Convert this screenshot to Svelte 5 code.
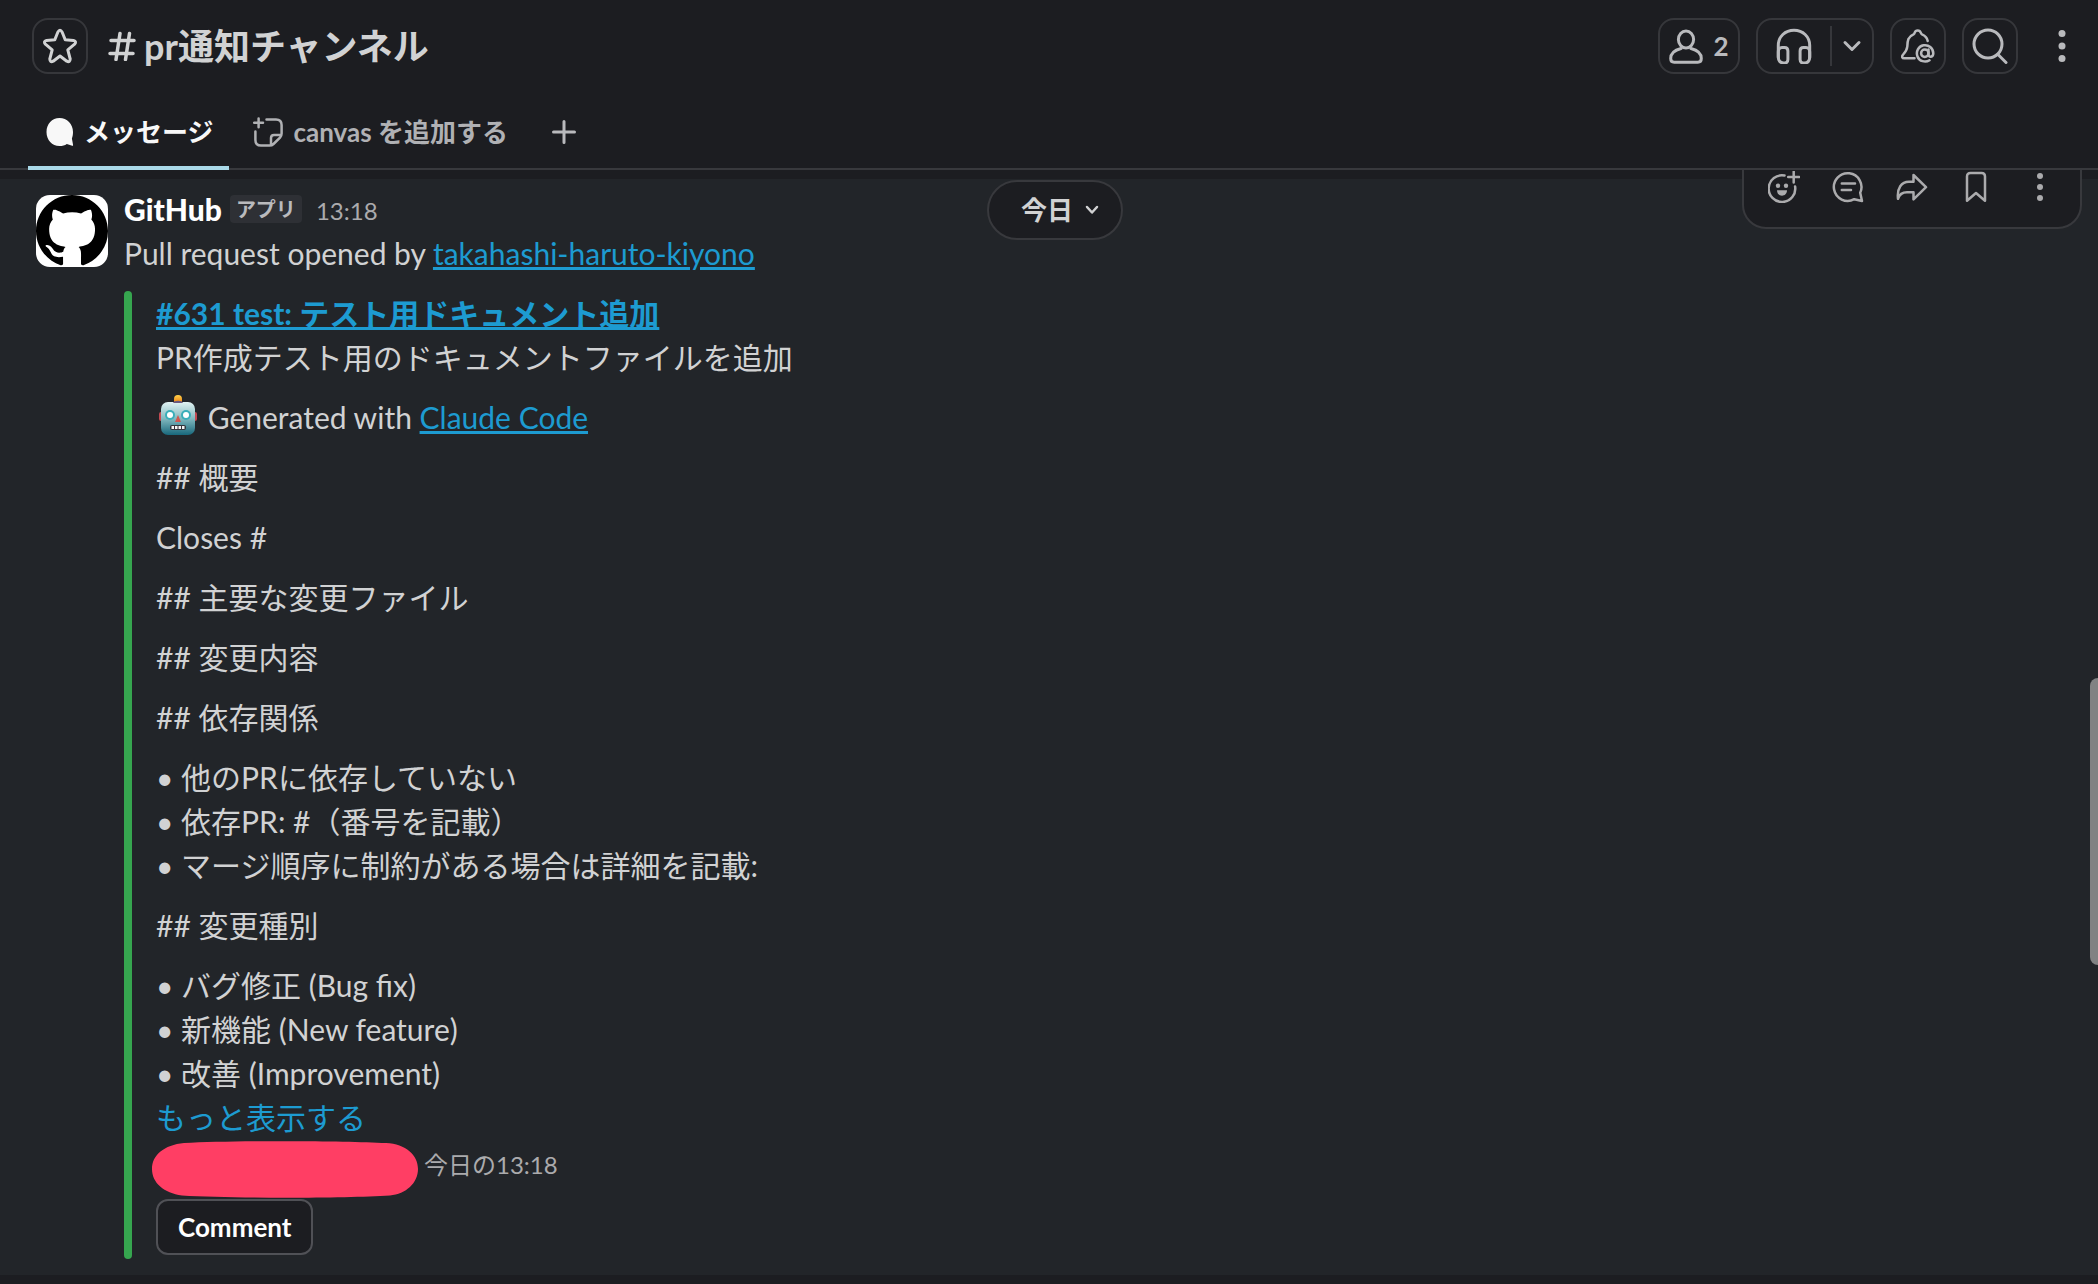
<script>
	const intro = ['## 概要', 'Closes #', '## 主要な変更ファイル', '## 変更内容', '## 依存関係'];
	const dependencies = [
		'他のPRに依存していない',
		'依存PR: #（番号を記載）',
		'マージ順序に制約がある場合は詳細を記載:'
	];
	const changeTypes = ['バグ修正 (Bug fix)', '新機能 (New feature)', '改善 (Improvement)'];
</script>

<div class="page">
	<header>
		<div class="title-bar">
			<button class="box-btn" aria-label="スターを付ける">
				<svg class="icon" width="36" height="36" viewBox="0 0 36 36">
					<path d="M15.8 4.2Q18 .4 20.2 4.2L23.2 11.8L31.5 12.4Q35 13.4 32.6 16.2L25.8 21.8L28.2 31Q28 34.8 24.8 33.2L18 28L11.2 33.2Q8 34.8 7.8 31L10.2 21.8L3.4 16.2Q1 13.4 4.5 12.4L12.8 11.8Z" />
				</svg>
			</button>
			<h1>
				<svg class="icon hash" width="28" height="30" viewBox="0 0 28 30">
					<path d="M3 9.5H26M2 22.5H25M12 2.5L8 28.5M21.5 2.5L17.5 28.5" />
				</svg>
				<span>pr通知チャンネル</span>
			</h1>
			<div class="actions">
				<button class="box-btn members" aria-label="2 人のメンバー">
					<svg class="icon" width="34" height="36" viewBox="0 0 34 36">
						<ellipse cx="17" cy="11.5" rx="7.6" ry="8.6" />
						<path d="M12 20.5C5 22.3 1.7 26.5 1.7 30.5C1.7 33.2 3 34.2 5.2 34.2H28.8C31 34.2 32.3 33.2 32.3 30.5C32.3 26.500 29 22.3 22 20.5" />
					</svg>
					<span>2</span>
				</button>
				<div class="huddle">
					<button class="huddle-start" aria-label="ハドルミーティングを開始">
						<svg class="icon" width="36" height="36" viewBox="0 0 36 36">
							<path d="M2.3 30V17.500C2.3 8.5 9.2 2.3 18 2.3S33.7 8.5 33.7 17.5V30" />
							<path d="M2.3 24C2.3 21 3.5 19.5 6 19.5H8.5C10.8 19.5 11.9 20.7 11.9 23V31.5C11.9 34 10.8 35 8.8 35H7.5C4 35 2.3 32.5 2.3 28.5ZM33.7 24C33.7 21 32.5 19.5 30 19.5H27.5C25.2 19.5 24.1 20.7 24.1 23V31.5C24.1 34 25.2 35 27.2 35H28.5C32 35 33.7 32.5 33.7 28.5Z" />
						</svg>
					</button>
					<button class="huddle-more" aria-label="その他のオプション">
						<svg class="icon" width="20" height="20" viewBox="0 0 20 20">
							<path d="M3 6.5L10 13.5L17 6.5" />
						</svg>
					</button>
				</div>
				<button class="box-btn" aria-label="通知設定">
					<svg class="icon thin" width="34" height="34" viewBox="0 0 34 34">
						<path d="M13.5 29.3H3.2C1 29.3 .6 27.5 1.8 26C4.3 23.4 6 21.3 6.3 17.5C6.5 11.5 7 7.5 12.5 5.3C13.5 4.8 13.5 4.5 13.7 3.6C14.6 .7 18.8 .7 19.7 3.6C19.9 4.5 20 4.8 21 5.3C24.5 6.8 26.3 9 26.7 12" />
						<circle cx="23.8" cy="24.3" r="3.7" />
						<path d="M27.5 20.5V25.5C27.5 28.8 32.3 28.5 32.3 24.3A8.2 8.2 0 1 0 28.5 31.3" />
					</svg>
				</button>
				<button class="box-btn" aria-label="検索">
					<svg class="icon" width="36" height="36" viewBox="0 0 36 36">
						<circle cx="16" cy="16" r="14" />
						<path d="M26 26.5L34 34.5" />
					</svg>
				</button>
				<button class="plain-btn" aria-label="その他">
					<svg class="dots" width="36" height="36" viewBox="0 0 36 36">
						<circle cx="18" cy="5.5" r="3.5" />
						<circle cx="18" cy="18" r="3.5" />
						<circle cx="18" cy="30.5" r="3.5" />
					</svg>
				</button>
			</div>
		</div>
		<nav class="tabs">
			<a href="#messages" class="tab active">
				<svg width="28" height="28" viewBox="0 0 28 28">
					<path fill="currentColor" d="M13.5 0C6 0 .5 6 .5 14S6 28 13.5 28C16.5 28 18.8 27.2 20.8 25.9L26.2 27.8Q27.2 28 27.1 26.9L25.9 20.5C26.6 18.6 27 16.5 27 14C27 6 21 0 13.5 0Z" />
				</svg>
				<span>メッセージ</span>
			</a>
			<a href="#canvas" class="tab">
				<svg class="icon thin" width="30" height="30" viewBox="0 0 30 30">
					<path d="M1.2 5.8H10M5.6 1.4V10.2M13.5 2.4H23C27 2.4 28.6 4 28.6 8V16.5C28.6 18.5 28 19.5 27 20.6L20.5 27C19.5 28 18.5 28.6 16.5 28.6H8C4 28.6 2.4 27 2.4 23V14.5M18 28V21C18 19 19 18 21 18H28" />
				</svg>
				<span>canvas を追加する</span>
			</a>
			<button class="add-tab" aria-label="タブを追加">
				<svg class="icon" width="24" height="24" viewBox="0 0 24 24">
					<path d="M12 1.5V22.5M1.5 12H22.5" />
				</svg>
			</button>
		</nav>
	</header>

	<main>
		<article class="message">
			<svg class="avatar" width="72" height="72" viewBox="0 0 16 16">
				<path d="M8 0C3.58 0 0 3.58 0 8c0 3.54 2.29 6.53 5.47 7.59.4.07.55-.17.55-.38 0-.19-.01-.82-.01-1.49-2.01.37-2.53-.49-2.69-.94-.09-.23-.48-.94-.82-1.13-.28-.15-.68-.52-.01-.53.63-.01 1.08.58 1.23.82.72 1.21 1.87.87 2.33.66.07-.52.28-.87.51-1.07-1.78-.2-3.64-.89-3.64-3.95 0-.87.31-1.59.82-2.15-.08-.2-.36-1.02.08-2.12 0 0 .67-.21 2.2.82.64-.18 1.32-.27 2-.27.68 0 1.36.09 2 .27 1.53-1.04 2.2-.82 2.2-.82.44 1.1.16 1.92.08 2.12.51.56.82 1.27.82 2.15 0 3.07-1.87 3.75-3.65 3.95.29.25.54.73.54 1.48 0 1.07-.01 1.93-.01 2.2 0 .21.15.46.55.38A8.013 8.013 0 0016 8c0-4.42-3.58-8-8-8z" />
			</svg>
			<div class="body">
				<div class="meta">
					<strong>GitHub</strong>
					<span class="badge">アプリ</span>
					<time>13:18</time>
				</div>
				<p>Pull request opened by <a href="#author">takahashi-haruto-kiyono</a></p>
				<section class="attachment">
					<div>
						<p class="pr-title"><a href="#pr-631">#631 test: テスト用ドキュメント追加</a></p>
						<p>PR作成テスト用のドキュメントファイルを追加</p>
					</div>
					<p>
						<svg class="emoji" width="44" height="44" viewBox="0 0 44 44" role="img" aria-label="ロボット">
							<defs>
								<linearGradient id="robot-face" x1="0" y1="0" x2="0" y2="1">
									<stop offset="0" stop-color="#e2f3f3" />
									<stop offset=".5" stop-color="#82b9bf" />
									<stop offset="1" stop-color="#17677b" />
								</linearGradient>
								<linearGradient id="robot-light" x1="0" y1="0" x2="0" y2="1">
									<stop offset="0" stop-color="#ffd34a" />
									<stop offset=".6" stop-color="#f0911f" />
									<stop offset="1" stop-color="#7a4668" />
								</linearGradient>
							</defs>
							<rect x="3" y="17" width="4" height="9" rx="2" fill="#c24a52" />
							<rect x="37" y="17" width="4" height="9" rx="2" fill="#c24a52" />
							<rect x="18" y="0" width="8" height="10" rx="4" fill="url(#robot-light)" />
							<rect x="5" y="7" width="34" height="33" rx="7" fill="url(#robot-face)" />
							<path d="M17 8C18 5 26 5 27 8Z" fill="#6b5a7e" />
							<circle cx="14" cy="20" r="5" fill="#39aeb9" />
							<circle cx="30" cy="20" r="5" fill="#39aeb9" />
							<circle cx="14" cy="20" r="3" fill="#fff" />
							<circle cx="30" cy="20" r="3" fill="#fff" />
							<path d="M22 20L25 27H19Z" fill="#d0564f" />
							<rect x="14" y="30" width="16" height="5" rx="2" fill="#33343a" />
							<path d="M15.5 31H18V34H15.5ZM19 31H21.5V34H19ZM22.5 31H25V34H22.5ZM26 31H28.5V34H26Z" fill="#f4f4f4" />
						</svg>
						Generated with <a href="#claude-code">Claude Code</a>
					</p>
					{#each intro as line}
						<p>{line}</p>
					{/each}
					<div>
						{#each dependencies as item}
							<p>• {item}</p>
						{/each}
					</div>
					<p>## 変更種別</p>
					<div>
						{#each changeTypes as item}
							<p>• {item}</p>
						{/each}
						<button class="show-more">もっと表示する</button>
						<div class="source">
							<svg width="266" height="57" viewBox="0 0 266 57">
								<path fill="#ff3e64" d="M32 2C80-.5 190-.5 234 2C254 3 266 14 266 28S254 53 238 54.5C190 57.5 80 57.5 30 54.5C12 52 0 42 0 28S12 4 32 2Z" />
							</svg>
							<span>今日の13:18</span>
						</div>
						<button class="comment">Comment</button>
					</div>
				</section>
			</div>
		</article>

		<div class="date-row">
			<button class="date-pill">
				<span>今日</span>
				<svg class="icon thin" width="14" height="14" viewBox="0 0 14 14">
					<path d="M2 4L7 9.5L12 4" />
				</svg>
			</button>
		</div>

		<div class="toolbar">
			<button aria-label="リアクションする">
				<svg class="icon thin" width="32" height="32" viewBox="0 0 32 32">
					<path d="M16.5 4.6A13.3 13.3 0 1 0 27.1 15.5M25.7 .5V11.5M20.2 6H31.2" />
					<circle class="solid" cx="10" cy="14.7" r="2.2" />
					<circle class="solid" cx="18" cy="14.7" r="2.2" />
					<path class="solid" d="M9 19.3H19C19 26.5 9 26.5 9 19.3Z" />
				</svg>
			</button>
			<button aria-label="スレッドで返信する">
				<svg class="icon thin" width="32" height="32" viewBox="0 0 32 32">
					<path d="M28.2 21.8A13.8 13.8 0 1 0 22.2 28.2L30 30Z" />
					<path d="M9.8 12.5H23M9.8 19H19" />
				</svg>
			</button>
			<button aria-label="メッセージを転送する">
				<svg class="icon thin" width="32" height="32" viewBox="0 0 32 32">
					<path d="M17.5 4L30 16.2L17.5 28.4V21.3H11C6 21.3 3.5 23 2 27.8C.8 17 5.5 10.8 13 10.8H17.5Z" />
				</svg>
			</button>
			<button aria-label="後で">
				<svg class="icon thin" width="32" height="32" viewBox="0 0 32 32">
					<path d="M7 5.5C7 3.2 8.2 2 10.5 2H21.5C23.8 2 25 3.2 25 5.5V29.8L16 22L7 29.8Z" />
				</svg>
			</button>
			<button aria-label="その他の操作">
				<svg class="dots" width="32" height="32" viewBox="0 0 32 32">
					<circle cx="16" cy="5" r="3" />
					<circle cx="16" cy="16" r="3" />
					<circle cx="16" cy="27" r="3" />
				</svg>
			</button>
		</div>

		<div class="scroll-thumb"></div>
	</main>
</div>

<style>
	:global(body) {
		background: #1c1d21;
	}

	.page {
		display: flex;
		flex-direction: column;
		min-height: 100vh;
		font-family: Lato, 'Noto Sans CJK JP', sans-serif;
		font-size: 30px;
		line-height: 44px;
		color: #d1d2d3;
		background: #1c1d21;
	}

	h1,
	p {
		margin: 0;
	}

	button {
		display: flex;
		align-items: center;
		justify-content: center;
		padding: 0;
		border: none;
		background: none;
		color: #b9babd;
		font: inherit;
		cursor: pointer;
	}

	svg {
		flex-shrink: 0;
	}

	.icon {
		fill: none;
		stroke: currentColor;
		stroke-width: 3;
		stroke-linecap: round;
		stroke-linejoin: round;
	}

	.icon.thin {
		stroke-width: 2.5;
	}

	.icon.hash {
		stroke-width: 3.5;
	}

	.icon .solid {
		fill: currentColor;
		stroke: none;
	}

	.dots {
		fill: currentColor;
	}

	header {
		border-bottom: 2px solid #38393d;
	}

	.title-bar {
		display: flex;
		align-items: center;
		padding: 18px 8px 0 32px;
	}

	.box-btn {
		box-sizing: border-box;
		width: 56px;
		height: 56px;
		border: 2px solid #36373b;
		border-radius: 16px;
	}

	.title-bar > .box-btn {
		color: #d1d2d3;
	}

	h1 {
		display: flex;
		align-items: center;
		gap: 8px;
		margin-left: 20px;
		font-size: 36px;
		font-weight: 700;
	}

	.actions {
		display: flex;
		gap: 16px;
		margin-left: auto;
	}

	.members {
		gap: 10px;
		width: 82px;
		font-size: 26px;
		font-weight: 700;
	}

	.huddle {
		display: flex;
		align-items: center;
		box-sizing: border-box;
		height: 56px;
		border: 2px solid #36373b;
		border-radius: 16px;
	}

	.huddle-start {
		width: 74px;
		height: 40px;
		border-right: 2px solid #36373b;
	}

	.huddle-more {
		width: 40px;
		height: 40px;
	}

	.plain-btn {
		width: 56px;
		height: 56px;
	}

	.tabs {
		display: flex;
		align-items: flex-start;
		margin: 24px 0 -2px;
		padding: 0 28px;
		font-size: 26px;
		font-weight: 700;
	}

	.tab {
		display: flex;
		align-items: center;
		gap: 10px;
		height: 68px;
		padding: 0 16px 0 18px;
		border-bottom: 4px solid transparent;
		color: #b0b1b4;
		text-decoration: none;
	}

	.tab + .tab {
		padding: 0 8px;
		margin-left: 16px;
	}

	.tab.active {
		color: #f8f8f8;
		border-color: #a9d9e8;
	}

	.add-tab {
		width: 56px;
		height: 68px;
		margin-left: 20px;
	}

	main {
		position: relative;
		flex: 1;
		overflow: hidden;
		padding: 9px 0;
	}

	.message {
		display: flex;
		gap: 16px;
		padding: 8px 36px 16px;
		background: #222529;
	}

	.avatar {
		margin-top: 8px;
		border-radius: 14px;
		background: #fff;
	}

	.body {
		flex: 1;
		min-width: 0;
	}

	.meta {
		display: flex;
		align-items: center;
		height: 44px;
	}

	.meta strong {
		font-weight: 900;
		color: #fff;
	}

	.badge {
		margin-left: 8px;
		padding: 0 6px;
		border-radius: 4px;
		background: #2e3035;
		color: #b9babd;
		font-size: 20px;
		font-weight: 700;
		line-height: 28px;
	}

	time {
		margin-left: 14px;
		padding-top: 4px;
		font-size: 24px;
		line-height: 40px;
		color: #ababad;
	}

	.body a {
		color: #1d9bd1;
		text-decoration-thickness: 3px;
		text-underline-offset: 2px;
	}

	.attachment {
		display: flex;
		flex-direction: column;
		gap: 16px;
		position: relative;
		margin-top: 16px;
		padding: 0 0 4px 32px;
	}

	.attachment::before {
		content: '';
		position: absolute;
		top: 0;
		bottom: 0;
		left: 0;
		width: 8px;
		border-radius: 4px;
		background: #36a64f;
	}

	.pr-title {
		font-weight: 700;
	}

	.emoji {
		vertical-align: top;
	}

	.show-more {
		color: #1d9bd1;
	}

	.source {
		display: flex;
		gap: 6px;
		height: 60px;
		margin-left: -4px;
		font-size: 24px;
		line-height: 52px;
		color: #ababad;
	}

	.source svg {
		margin-top: 2px;
	}

	.comment {
		padding: 0 20px;
		border: 2px solid #505156;
		border-radius: 12px;
		background: #1c1d21;
		color: #fff;
		font-size: 26px;
		font-weight: 700;
		line-height: 52px;
	}

	.date-row {
		position: absolute;
		top: 10px;
		left: 12px;
		right: 0;
		display: flex;
		justify-content: center;
		pointer-events: none;
	}

	.date-pill {
		box-sizing: border-box;
		gap: 12px;
		height: 60px;
		padding: 0 22px 0 32px;
		border: 2px solid #38393d;
		border-radius: 30px;
		background: #1c1d21;
		color: #d1d2d3;
		font-size: 26px;
		font-weight: 700;
		pointer-events: auto;
	}

	.toolbar {
		position: absolute;
		top: -25px;
		right: 16px;
		display: flex;
		padding: 8px;
		border: 2px solid #38393d;
		border-radius: 24px;
		background: #1c1d21;
	}

	.toolbar button {
		width: 64px;
		height: 64px;
		color: #ababad;
	}

	.scroll-thumb {
		position: absolute;
		top: 45.6%;
		right: 0;
		width: 8px;
		height: 25.8%;
		border-radius: 8px 0 0 8px;
		background: #818283;
	}
</style>
